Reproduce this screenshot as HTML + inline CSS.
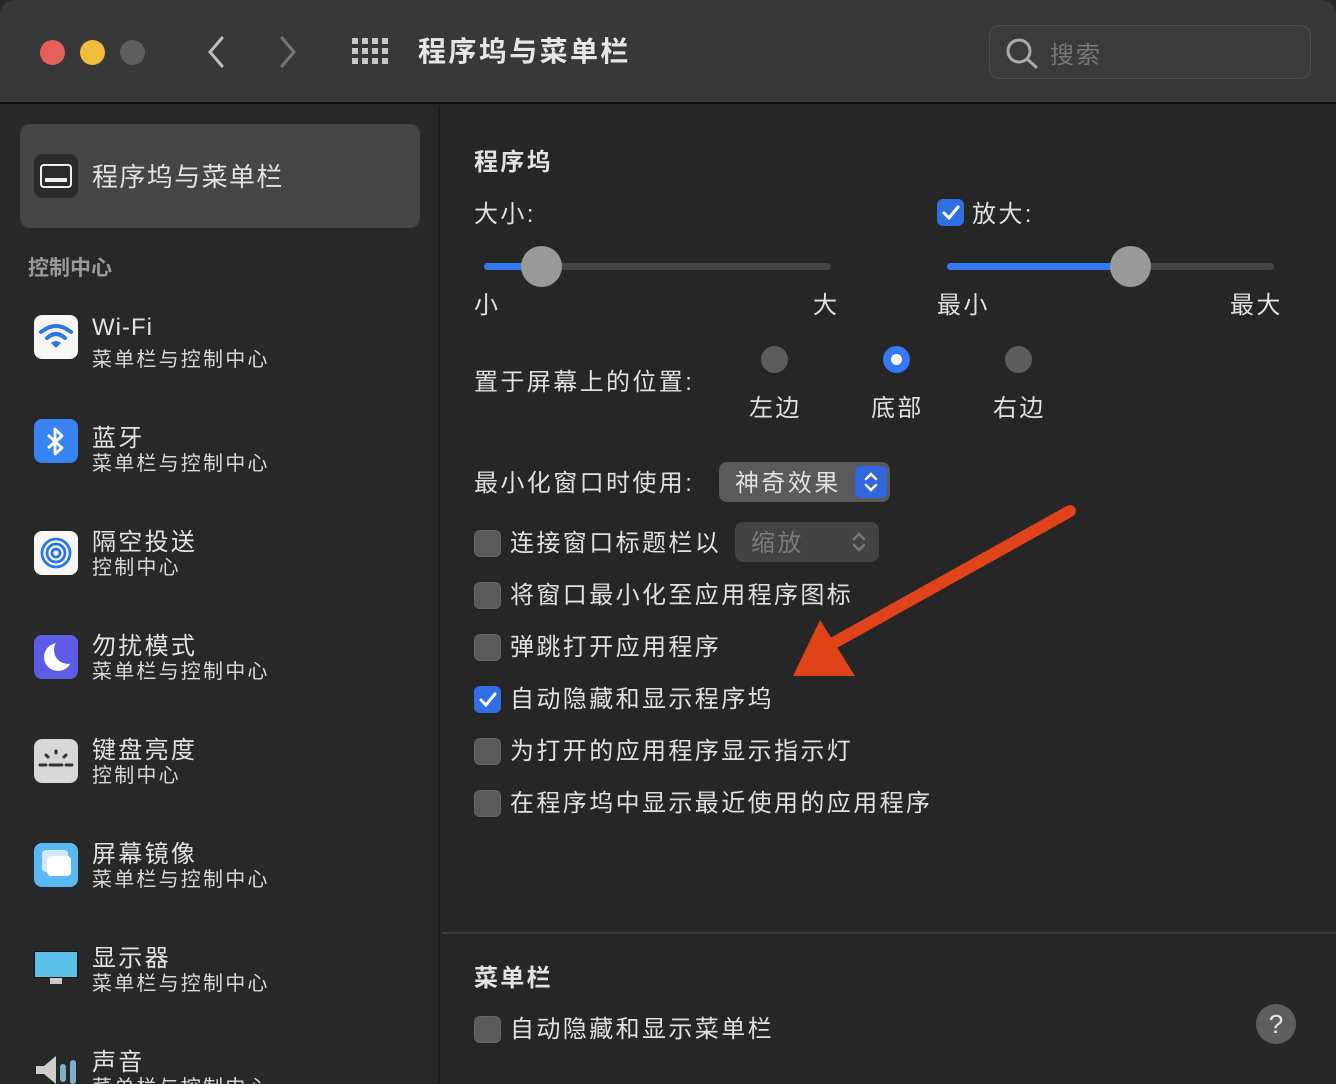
<!DOCTYPE html>
<html><head><meta charset="utf-8"><style>
*{margin:0;padding:0;box-sizing:border-box}
html{width:1336px;height:1084px;overflow:hidden}
body{width:1336px;height:1084px;background:#262626;font-family:"Liberation Sans","Noto Sans CJK SC",sans-serif;color:#dedede;position:relative;overflow:hidden}
.a{position:absolute;white-space:nowrap}
.tb{left:0;top:0;width:1336px;height:104px;background:#383838;border-bottom:2px solid #111;border-radius:14px 14px 0 0}
.dot{width:25px;height:25px;border-radius:50%}
.side{left:0;top:105px;width:440px;height:979px;background:#282828;border-right:2px solid #1b1b1b}
.t{font-size:24px;color:#e2e2e2;letter-spacing:2.3px}
.s{font-size:20px;color:#d8d8d8;letter-spacing:2.2px}
.ic{left:34px;width:44px;height:30px;border-radius:8px;overflow:hidden}
.cb{width:27px;height:27px;border-radius:6px;background:#5a5a5a;border:1px solid #666}
.cbx{background:#2f6ee3;border-color:#2f6ee3}
.lbl{font-size:24px;color:#e0e0e0;letter-spacing:2.4px}
.radio{width:27px;height:27px;border-radius:50%;background:#5c5c5c}
</style></head><body>
<div class="a tb"></div>
<div class="a dot" style="left:40px;top:40px;background:#e5605a"></div>
<div class="a dot" style="left:80px;top:40px;background:#efbd3c"></div>
<div class="a dot" style="left:120px;top:40px;background:#5e5e5e"></div>
<svg class="a" style="left:200px;top:34px" width="110" height="36"><path d="M22 4 L10 18 L22 32" stroke="#bdbdbd" stroke-width="3" fill="none" stroke-linecap="round"/><path d="M82 4 L94 18 L82 32" stroke="#777" stroke-width="3" fill="none" stroke-linecap="round"/></svg>
<svg class="a" style="left:352px;top:38px" width="38" height="28"><g fill="#c8c8c8"><rect x="0" y="0" width="6" height="6"/><rect x="10" y="0" width="6" height="6"/><rect x="20" y="0" width="6" height="6"/><rect x="30" y="0" width="6" height="6"/><rect x="0" y="10" width="6" height="6"/><rect x="10" y="10" width="6" height="6"/><rect x="20" y="10" width="6" height="6"/><rect x="30" y="10" width="6" height="6"/><rect x="0" y="20" width="6" height="6"/><rect x="10" y="20" width="6" height="6"/><rect x="20" y="20" width="6" height="6"/><rect x="30" y="20" width="6" height="6"/></g></svg>
<div class="a" style="left:418px;top:30px;font-size:28px;font-weight:bold;color:#e6e6e6;letter-spacing:2.4px">程序坞与菜单栏</div>
<div class="a" style="left:989px;top:25px;width:322px;height:54px;border:1.5px solid #4c4c4c;border-radius:10px;background:#3b3b3b"></div>
<svg class="a" style="left:1004px;top:36px" width="36" height="34"><circle cx="15" cy="15" r="11" stroke="#aaa" stroke-width="3" fill="none"/><path d="M23 23 L32 31" stroke="#aaa" stroke-width="3" stroke-linecap="round"/></svg>
<div class="a" style="left:1050px;top:35px;font-size:24px;color:#777;letter-spacing:2px">搜索</div>

<div class="a side"></div>
<div class="a" style="left:20px;top:124px;width:400px;height:104px;background:#454545;border-radius:10px"></div>
<div class="a" style="left:34px;top:154px;width:44px;height:44px;border-radius:8px;background:#2b2b2b"></div>
<div class="a" style="left:40px;top:164px;width:32px;height:24px;border:2.5px solid #eee;border-radius:4px"></div>
<div class="a" style="left:45px;top:178px;width:22px;height:4px;background:#eee"></div>
<div class="a t" style="left:92px;top:157px;font-size:26px;letter-spacing:1.4px">程序坞与菜单栏</div>
<div class="a" style="left:28px;top:252px;font-size:21px;color:#9a9a9a;font-weight:bold">控制中心</div>

<div class="a ic" style="top:315px;height:44px;background:#f7f7f7"></div>
<svg class="a" style="left:38px;top:322px" width="36" height="28"><path d="M3 10 Q18 -2 33 10" stroke="#2d76e6" stroke-width="4" fill="none" stroke-linecap="round"/><path d="M9 16 Q18 8 27 16" stroke="#2d76e6" stroke-width="4" fill="none" stroke-linecap="round"/><path d="M13 21 L18 26 L23 21 Q18 17 13 21Z" fill="#2d76e6"/></svg>
<div class="a t" style="left:92px;top:314px;letter-spacing:1px">Wi-Fi</div><div class="a s" style="left:92px;top:343px">菜单栏与控制中心</div>

<div class="a ic" style="top:419px;height:44px;background:#3a83f4"></div>
<svg class="a" style="left:44px;top:426px" width="24" height="32"><path d="M4 9 L18 22 L11 28 L11 3 L18 10 L4 22" stroke="#fff" stroke-width="2.8" fill="none" stroke-linejoin="round"/></svg>
<div class="a t" style="left:92px;top:418px">蓝牙</div><div class="a s" style="left:92px;top:447px">菜单栏与控制中心</div>

<div class="a ic" style="top:531px;height:44px;background:#f7f7f7"></div>
<svg class="a" style="left:38px;top:533px" width="36" height="40"><g stroke="#2d76e6" stroke-width="2.8" fill="none"><circle cx="18" cy="20" r="4"/><circle cx="18" cy="20" r="9"/><circle cx="18" cy="20" r="14"/></g></svg>
<div class="a t" style="left:92px;top:522px">隔空投送</div><div class="a s" style="left:92px;top:551px">控制中心</div>

<div class="a ic" style="top:635px;height:44px;background:#5e5ce6">
<div class="a" style="left:10px;top:8px;width:28px;height:28px;border-radius:50%;background:#fff"></div>
<div class="a" style="left:20px;top:1px;width:28px;height:28px;border-radius:50%;background:#5e5ce6"></div></div>
<div class="a t" style="left:92px;top:626px">勿扰模式</div><div class="a s" style="left:92px;top:655px">菜单栏与控制中心</div>

<div class="a ic" style="top:739px;height:44px;background:#d8d8da"></div>
<svg class="a" style="left:36px;top:745px" width="40" height="30"><g stroke="#333" stroke-width="3" stroke-linecap="round"><path d="M4 20 H10 M14 20 H26 M30 20 H36 M20 6 V8 M10 10 L12 12 M30 10 L28 12"/></g></svg>
<div class="a t" style="left:92px;top:730px">键盘亮度</div><div class="a s" style="left:92px;top:759px">控制中心</div>

<div class="a ic" style="top:843px;height:44px;background:#5ab8f5"></div>
<div class="a" style="left:42px;top:850px;width:26px;height:22px;border-radius:4px;background:#cfeafd"></div>
<div class="a" style="left:47px;top:856px;width:24px;height:20px;border-radius:4px;background:#fff"></div>
<div class="a t" style="left:92px;top:834px">屏幕镜像</div><div class="a s" style="left:92px;top:863px">菜单栏与控制中心</div>

<div class="a" style="left:34px;top:951px;width:44px;height:27px;background:#5cc0ea;border:1px solid #111"></div>
<div class="a" style="left:50px;top:978px;width:12px;height:6px;background:#ccc"></div>
<div class="a t" style="left:92px;top:938px">显示器</div><div class="a s" style="left:92px;top:967px">菜单栏与控制中心</div>

<svg class="a" style="left:34px;top:1052px" width="46" height="32"><path d="M2 14 H10 L22 4 V32 L10 22 H2Z" fill="#ccc"/><rect x="26" y="12" width="6" height="18" rx="3" fill="#7fb0c8"/><rect x="36" y="8" width="6" height="24" rx="3" fill="#7fb0c8"/></svg>
<div class="a t" style="left:92px;top:1042px">声音</div><div class="a s" style="left:92px;top:1071px">菜单栏与控制中心</div>

<!-- right panel -->
<div class="a" style="left:474px;top:142px;font-size:24px;font-weight:bold;color:#e2e2e2;letter-spacing:2.3px">程序坞</div>
<div class="a lbl" style="left:474px;top:194px">大小:</div>
<div class="a" style="left:484px;top:263px;width:347px;height:7px;border-radius:4px;background:#444"></div>
<div class="a" style="left:484px;top:263px;width:60px;height:7px;border-radius:4px;background:#3478f6"></div>
<div class="a" style="left:521px;top:246px;width:41px;height:41px;border-radius:50%;background:#999"></div>
<div class="a lbl" style="left:474px;top:285px">小</div><div class="a lbl" style="left:813px;top:285px">大</div>

<div class="a cb cbx" style="left:937px;top:199px"></div>
<svg class="a" style="left:940px;top:202px" width="22" height="22"><path d="M4 11 L9 16 L18 5" stroke="#fff" stroke-width="3" fill="none" stroke-linecap="round"/></svg>
<div class="a lbl" style="left:972px;top:194px">放大:</div>
<div class="a" style="left:947px;top:263px;width:327px;height:7px;border-radius:4px;background:#444"></div>
<div class="a" style="left:947px;top:263px;width:185px;height:7px;border-radius:4px;background:#3478f6"></div>
<div class="a" style="left:1110px;top:246px;width:41px;height:41px;border-radius:50%;background:#999"></div>
<div class="a lbl" style="left:937px;top:285px">最小</div><div class="a lbl" style="left:1230px;top:285px">最大</div>

<div class="a lbl" style="left:474px;top:362px">置于屏幕上的位置:</div>
<div class="a radio" style="left:761px;top:346px"></div>
<div class="a radio" style="left:883px;top:346px;background:#3478f6"></div>
<div class="a" style="left:891px;top:354px;width:11px;height:11px;border-radius:50%;background:#fff"></div>
<div class="a radio" style="left:1005px;top:346px"></div>
<div class="a lbl" style="left:749px;top:388px">左边</div><div class="a lbl" style="left:871px;top:388px">底部</div><div class="a lbl" style="left:993px;top:388px">右边</div>

<div class="a lbl" style="left:474px;top:463px">最小化窗口时使用:</div>
<div class="a" style="left:719px;top:462px;width:171px;height:40px;border-radius:8px;background:#5a5a5a"></div>
<div class="a lbl" style="left:735px;top:463px">神奇效果</div>
<div class="a" style="left:855px;top:466px;width:32px;height:32px;border-radius:6px;background:#3167dc"></div>
<svg class="a" style="left:861px;top:469px" width="20" height="26"><path d="M5 10 L10 5 L15 10 M5 16 L10 21 L15 16" stroke="#fff" stroke-width="2.5" fill="none" stroke-linecap="round"/></svg>

<div class="a cb" style="left:474px;top:530px"></div>
<div class="a lbl" style="left:510px;top:523px">连接窗口标题栏以</div>
<div class="a" style="left:735px;top:522px;width:144px;height:40px;border-radius:8px;background:#434343"></div>
<div class="a lbl" style="left:751px;top:523px;color:#7a7a7a">缩放</div>
<svg class="a" style="left:849px;top:529px" width="20" height="26"><path d="M5 10 L10 5 L15 10 M5 16 L10 21 L15 16" stroke="#777" stroke-width="2.5" fill="none" stroke-linecap="round"/></svg>

<div class="a cb" style="left:474px;top:582px"></div><div class="a lbl" style="left:510px;top:575px">将窗口最小化至应用程序图标</div>
<div class="a cb" style="left:474px;top:634px"></div><div class="a lbl" style="left:510px;top:627px">弹跳打开应用程序</div>
<div class="a cb cbx" style="left:474px;top:686px"></div>
<svg class="a" style="left:477px;top:689px" width="22" height="22"><path d="M4 11 L9 16 L18 5" stroke="#fff" stroke-width="3" fill="none" stroke-linecap="round"/></svg>
<div class="a lbl" style="left:510px;top:679px">自动隐藏和显示程序坞</div>
<div class="a cb" style="left:474px;top:738px"></div><div class="a lbl" style="left:510px;top:731px">为打开的应用程序显示指示灯</div>
<div class="a cb" style="left:474px;top:790px"></div><div class="a lbl" style="left:510px;top:783px">在程序坞中显示最近使用的应用程序</div>

<svg class="a" style="left:0;top:0" width="1336" height="1084"><path d="M1070 511 L830 645" stroke="#e0431a" stroke-width="12" stroke-linecap="round"/><path d="M793 676 L820 620 L855 676Z" fill="#e0431a"/></svg>

<div class="a" style="left:442px;top:932px;width:894px;height:2px;background:#3a3a3a"></div>
<div class="a" style="left:474px;top:958px;font-size:24px;font-weight:bold;color:#e2e2e2;letter-spacing:2.3px">菜单栏</div>
<div class="a cb" style="left:474px;top:1016px"></div><div class="a lbl" style="left:510px;top:1009px">自动隐藏和显示菜单栏</div>
<div class="a" style="left:1256px;top:1004px;width:40px;height:40px;border-radius:50%;background:#5e5e5e;font-size:26px;text-align:center;line-height:40px;color:#e8e8e8">?</div>
</body></html>
